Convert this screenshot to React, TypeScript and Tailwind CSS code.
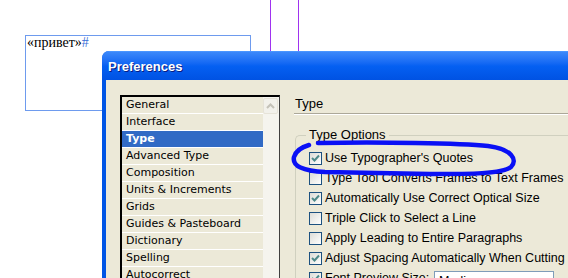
import React from "react";

const items = [
  "General",
  "Interface",
  "Type",
  "Advanced Type",
  "Composition",
  "Units & Increments",
  "Grids",
  "Guides & Pasteboard",
  "Dictionary",
  "Spelling",
  "Autocorrect",
];

const options: [string, boolean][] = [
  ["Use Typographer's Quotes", true],
  ["Type Tool Converts Frames to Text Frames", false],
  ["Automatically Use Correct Optical Size", true],
  ["Triple Click to Select a Line", false],
  ["Apply Leading to Entire Paragraphs", false],
  ["Adjust Spacing Automatically When Cutting and Pasting Words", true],
];

function Check({ on }: { on: boolean }) {
  return (
    <div className="w-[13px] h-[13px] shrink-0 border border-[#1C5180] bg-gradient-to-br from-[#DCDCD7] to-[#FFFFFF] flex items-center justify-center">
      {on && (
        <svg width="9" height="9" viewBox="0 0 9 9">
          <path d="M1 4 L3.5 6.5 L8 1.5" stroke="#4E8A8A" strokeWidth="2" fill="none" />
        </svg>
      )}
    </div>
  );
}

export default function App() {
  return (
    <div className="relative w-[568px] h-[278px] bg-white overflow-hidden" style={{ fontFamily: '"Liberation Sans", Arial, sans-serif' }}>
      {/* guides */}
      <div className="absolute left-[270px] top-0 w-px h-[52px] bg-[#A033F0]" />
      <div className="absolute left-[298px] top-0 w-px h-[52px] bg-[#A033F0]" />
      {/* text frame */}
      <div className="absolute left-[25px] top-[35px] w-[226px] h-[76px] border border-[#6E9BEE]">
        <div className="pl-px text-[14px] leading-[14px] text-black" style={{ fontFamily: '"Liberation Serif", "Times New Roman", serif' }}>
          «привет»<span className="text-[#3A6FD8]">#</span>
        </div>
      </div>

      {/* dialog window */}
      <div className="absolute left-[102px] top-[51px] w-[520px] h-[260px] flex flex-col rounded-tl-[7px] overflow-hidden bg-[#0055E5]">
        <div className="h-[29px] shrink-0 flex items-center pl-[6px] bg-gradient-to-b from-[#3C88FA] via-[#0560F2] to-[#0052E3] border-t border-[#4A95FF]">
          <span className="text-white font-bold text-[13px] pt-[1px]" style={{ fontFamily: '"Liberation Sans", Arial, sans-serif', textShadow: "1px 1px 0 #0A1C80" }}>
            Preferences
          </span>
        </div>
        <div className="flex-1 ml-[4px] bg-[#ECE9D8] flex pl-[14px] pt-[15px] gap-[14px]">
          {/* list */}
          <div className="w-[160px] h-[200px] shrink-0 flex border-t-2 border-l-2 border-black border-r border-r-[#404040] bg-[#ECE9D8]">
            <div className="flex-1 flex flex-col" style={{ fontFamily: '"DejaVu Sans", Tahoma, sans-serif' }}>
              {items.map((it) => (
                <div
                  key={it}
                  className={
                    "h-[17px] shrink-0 flex items-center pl-[4px] text-[11px] border-b border-white " +
                    (it === "Type" ? "bg-[#316AC5] text-white font-bold" : "text-black")
                  }
                >
                  {it}
                </div>
              ))}
            </div>
            <div className="w-[16px] shrink-0 bg-[#F5F4EE] pt-px">
              <div className="w-[15px] h-[16px] rounded-[2px] border border-[#E6E3D8] bg-[#F2F1EB] flex items-center justify-center">
                <svg width="9" height="6" viewBox="0 0 9 6">
                  <path d="M1 5 L4.5 1.5 L8 5" stroke="#C4C2B8" strokeWidth="2" fill="none" />
                </svg>
              </div>
            </div>
          </div>

          {/* right pane */}
          <div className="flex-1 flex flex-col pt-[1px]">
            <div className="text-[13px] leading-[15px] text-black pl-px">Type</div>
            <div className="h-px bg-[#ACA899] mt-[2px]" />
            <div className="h-px bg-white" />
            <div className="relative mt-[20px] ml-px border-l border-t border-[#D0D0BF] rounded-tl-[5px] pl-[13px] pt-[12px] h-[200px]">
              <div className="absolute left-[10px] top-[-9px] bg-[#ECE9D8] px-[3px] text-[13px] leading-[15px] text-black">Type Options</div>
              <div className="flex flex-col">
                {options.map(([t, on]) => (
                  <div key={t} className="h-[20px] flex items-center gap-[3px] whitespace-nowrap">
                    <Check on={on} />
                    <span className="text-[12.5px] text-black">{t}</span>
                  </div>
                ))}
                <div className="h-[20px] flex items-center gap-[3px] whitespace-nowrap">
                  <Check on={true} />
                  <span className="text-[12.5px] text-black w-[106px] shrink-0">Font Preview Size:</span>
                  <div className="h-[20px] w-[120px] shrink-0 border border-[#7F9DB9] bg-white text-[12.5px] pl-[4px] mt-[6px]">Medium</div>
                </div>
              </div>
            </div>
          </div>
        </div>
      </div>

      {/* hand-drawn ellipse */}
      <svg className="absolute left-0 top-0 pointer-events-none" width="568" height="278" viewBox="0 0 568 278">
        <path
          d="M318 143 C 380 142, 460 143, 488 146 C 512 149, 518 160, 511 167 C 502 174, 470 174, 430 174 L 325 172 C 303 171, 292 166, 294 157 C 296 150, 302 147, 309 145"
          stroke="#0A10F5"
          strokeWidth="4.5"
          fill="none"
          strokeLinecap="round"
        />
      </svg>
    </div>
  );
}
